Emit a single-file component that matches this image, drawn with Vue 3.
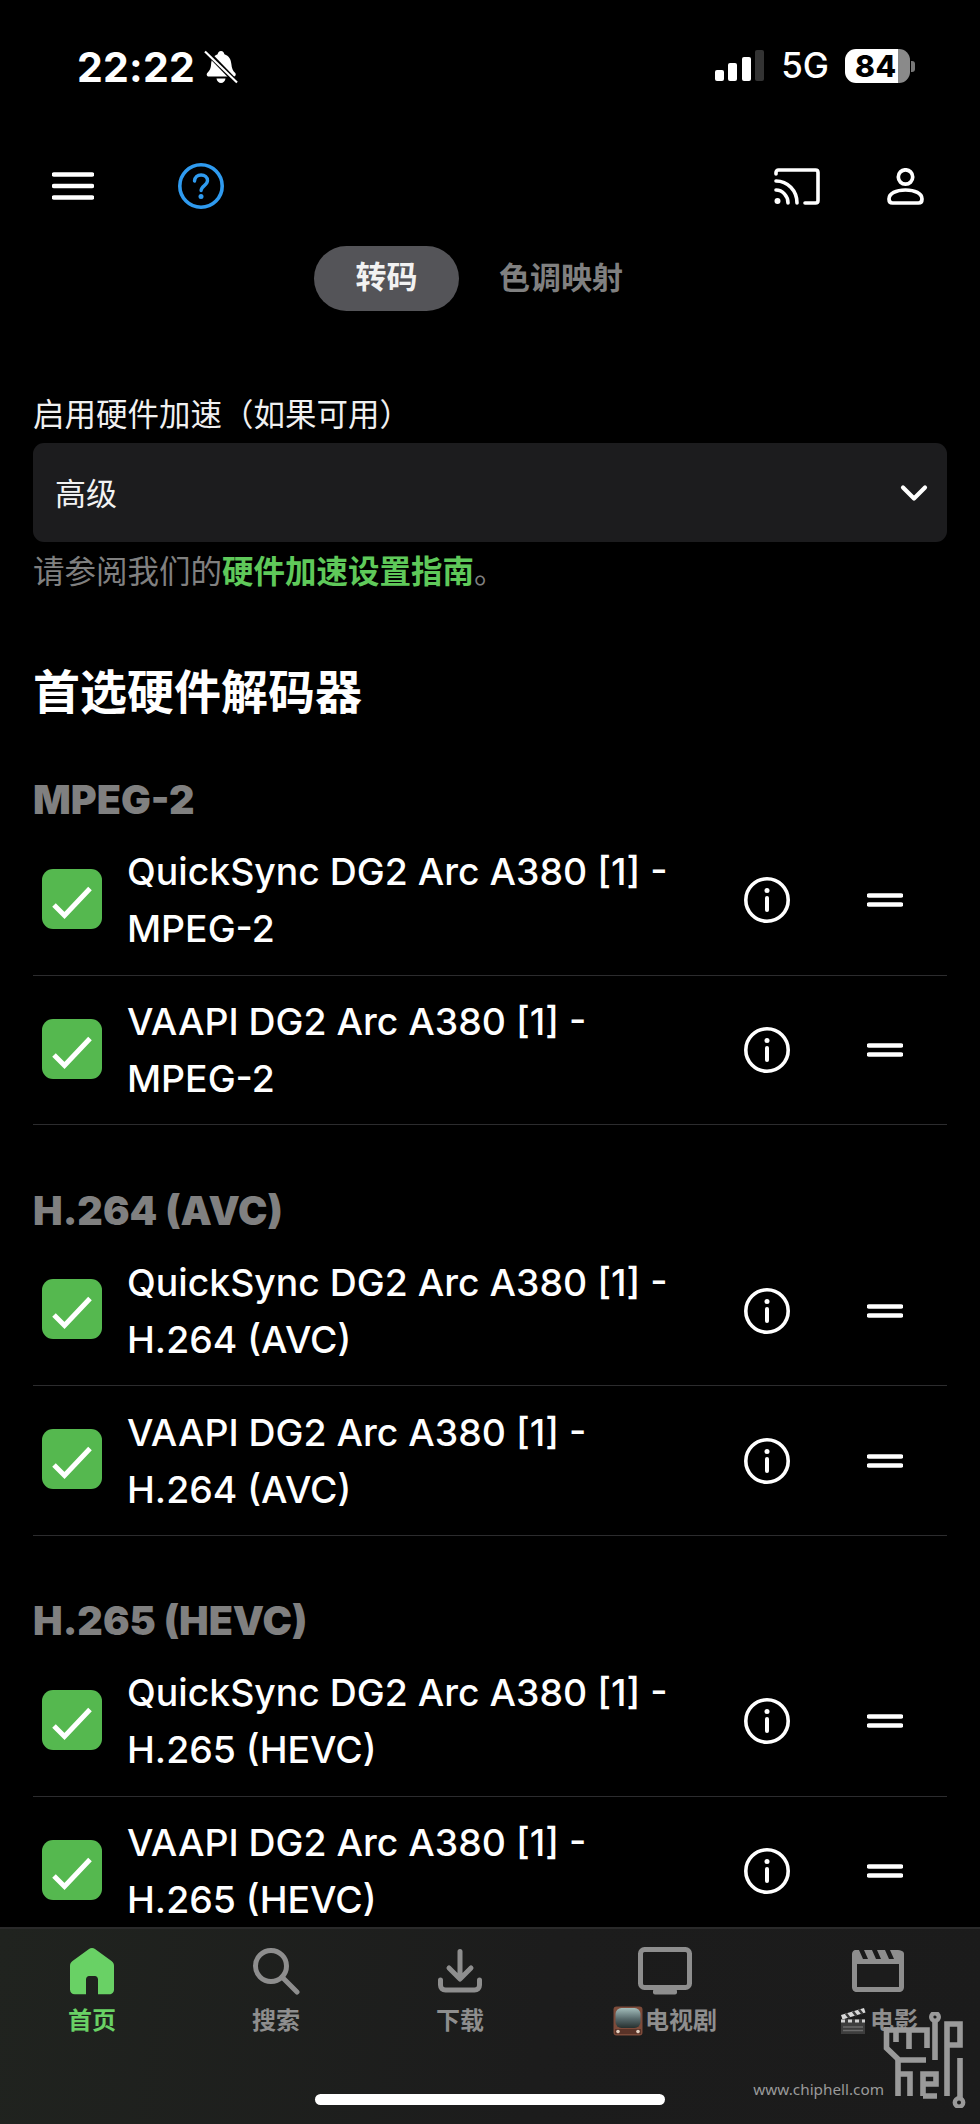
<template>
  <div class="screen">
    <header class="status-bar">
      <div class="status-left">
        <span class="clock">22:22</span>
        <svg class="bell" viewBox="0 0 34 34" width="34" height="34">
          <path d="M17 1c2 0 3 1.500 3.400 3.200 4.600 1.400 6.600 5 7 10 .3 4 1.500 6.500 3.600 8.500 1.500 1.600.6 3.800-1.500 3.800H5c-2.200 0-3-2.300-1.500-3.800 2.200-2.100 3.400-4.600 3.600-8.500.3-5 2.400-8.600 6.500-10C14 2.500 15 1 17 1z" fill="#fff" />
          <path d="M12.500 28.500h9c-.5 2.800-2.300 4.500-4.500 4.500s-4-1.700-4.500-4.500z" fill="#fff" />
          <path d="M2 1l31 32" stroke="#000" stroke-width="5" />
          <path d="M1 1.500l32 31" stroke="#fff" stroke-width="2.200" />
        </svg>
      </div>
      <div class="status-right">
        <div class="signal">
          <i class="bar b1"></i><i class="bar b2"></i><i class="bar b3"></i><i class="bar b4"></i>
        </div>
        <span class="net">5G</span>
        <div class="battery">
          <div class="battery-body"><span class="battery-num">84</span></div>
          <i class="battery-cap"></i>
        </div>
      </div>
    </header>

    <nav class="toolbar">
      <div class="toolbar-left">
        <svg class="ic-menu" viewBox="0 0 42 28" width="42" height="28">
          <path d="M2 2.500h38M2 14h38M2 25.500h38" stroke="#fff" stroke-width="4.400" stroke-linecap="round" />
        </svg>
        <svg class="ic-help" viewBox="0 0 46 46" width="46" height="46">
          <circle cx="23" cy="23" r="21.200" fill="none" stroke="#2f9bf0" stroke-width="3.600" />
          <path d="M16.500 18c.3-3.800 3-6 6.600-6 3.700 0 6.400 2.300 6.400 5.600 0 4.900-6.400 5-6.400 10" fill="none" stroke="#2f9bf0" stroke-width="3.400" stroke-linecap="round" />
          <circle cx="23" cy="33.500" r="2.500" fill="#2f9bf0" />
        </svg>
      </div>
      <div class="toolbar-right">
        <svg class="ic-cast" viewBox="0 0 46 37" width="46" height="37">
          <path d="M2 6V4.500C2 3 3 2 4.500 2h37C43 2 44 3 44 4.500v28c0 1.500-1 2.500-2.500 2.500H31" fill="none" stroke="#fff" stroke-width="3.600" stroke-linecap="round" />
          <path d="M2 13c11.500 0 21 9.500 21 22M2 22c6.500 0 12 6 12 13" fill="none" stroke="#fff" stroke-width="3.600" stroke-linecap="round" />
          <circle cx="3.500" cy="33" r="3" fill="#fff" />
        </svg>
        <svg class="ic-user" viewBox="0 0 37 37" width="37" height="37">
          <circle cx="18.500" cy="9" r="7.200" fill="none" stroke="#fff" stroke-width="3.700" />
          <path d="M18.500 22C9 22 2 25.500 2 31c0 2.500 1.300 4 3.500 4h26c2.200 0 3.500-1.500 3.500-4 0-5.500-7-9-16.500-9z" fill="none" stroke="#fff" stroke-width="3.700" />
        </svg>
      </div>
    </nav>

    <div class="tabs">
      <span class="tab active">转码</span>
      <span class="tab">色调映射</span>
    </div>

    <main class="content">
      <label class="field-label">启用硬件加速（如果可用）</label>
      <div class="select">
        <span>高级</span>
        <svg viewBox="0 0 28 18" width="28" height="18">
          <path d="M3 3.500l11 11 11-11" fill="none" stroke="#fff" stroke-width="4.200" stroke-linecap="round" stroke-linejoin="round" />
        </svg>
      </div>
      <p class="hint">请参阅我们的<b class="link">硬件加速设置指南</b>。</p>

      <h2 class="heading">首选硬件解码器</h2>

      <section v-for="group in groups" :key="group" class="codec">
        <h3 class="codec-title">{{ group }}</h3>
        <div v-for="api in apis" :key="api" class="row">
          <span class="check">
            <svg viewBox="0 0 60 60" width="60" height="60">
              <path d="M12 36l10.500 10.500L48 19.500" fill="none" stroke="#fff" stroke-width="5" />
            </svg>
          </span>
          <span class="row-text">{{ api }} DG2 Arc A380 [1] - {{ group }}</span>
          <svg class="ic-info" viewBox="0 0 46 46" width="46" height="46">
            <circle cx="23" cy="23" r="21.200" fill="none" stroke="#fff" stroke-width="3.600" />
            <circle cx="23" cy="13.500" r="2.500" fill="#fff" />
            <path d="M23 21v12" stroke="#fff" stroke-width="4" stroke-linecap="round" />
          </svg>
          <svg class="ic-drag" viewBox="0 0 36 14" width="36" height="14">
            <path d="M2 2.500h32M2 11.500h32" stroke="#fff" stroke-width="4.400" stroke-linecap="round" />
          </svg>
        </div>
      </section>
    </main>

    <footer class="tabbar">
      <div class="tab-item current">
        <svg viewBox="0 0 44 47" width="44" height="47">
          <path d="M19 1.500c1.800-1.300 4.200-1.300 6 0l16.500 12c1.500 1 2.500 2.800 2.500 4.700V42c0 2.800-2 4.800-4.800 4.800H28V32c0-2-1.500-3.500-3-3.500h-6c-1.500 0-3 1.500-3 3.500v14.800H4.800C2 46.800 0 44.800 0 42V18.200c0-1.900 1-3.700 2.500-4.700z" fill="#69d165" />
        </svg>
        <span>首页</span>
      </div>
      <div class="tab-item">
        <svg viewBox="0 0 48 48" width="48" height="48">
          <circle cx="19" cy="19" r="15.500" fill="none" stroke="#8e8e8e" stroke-width="5" />
          <path d="M30 30l15 15" stroke="#8e8e8e" stroke-width="5" stroke-linecap="round" />
        </svg>
        <span>搜索</span>
      </div>
      <div class="tab-item">
        <svg viewBox="0 0 44 44" width="44" height="44">
          <path d="M22 2.500v26M11 19l11 11 11-11" fill="none" stroke="#8e8e8e" stroke-width="5" stroke-linecap="round" stroke-linejoin="round" />
          <path d="M2.500 31v5c0 3 2 5 5 5h29c3 0 5-2 5-5v-5" fill="none" stroke="#8e8e8e" stroke-width="5" stroke-linecap="round" />
        </svg>
        <span>下载</span>
      </div>
      <div class="tab-item">
        <svg viewBox="0 0 54 48" width="54" height="48">
          <rect x="2.500" y="2.500" width="49" height="38" rx="4" fill="none" stroke="#8e8e8e" stroke-width="5" />
          <rect x="15" y="42" width="24" height="5.500" rx="2" fill="#8e8e8e" />
        </svg>
        <span class="with-emoji">
          <svg class="emoji" viewBox="0 0 30 30" width="30" height="30">
            <defs>
              <linearGradient id="tvScreen" x1="0.500" y1="0" x2="0.500" y2="1">
                <stop offset="0" stop-color="#a3bdbb" />
                <stop offset="0.55" stop-color="#56686a" />
                <stop offset="1" stop-color="#27302f" />
              </linearGradient>
            </defs>
            <rect x="0.500" y="0.500" width="29" height="29" rx="3" fill="#7d4b3a" />
            <rect x="2.500" y="2" width="25" height="20" rx="6" fill="url(#tvScreen)" />
            <rect x="2" y="23" width="26" height="5" fill="#5a3328" />
            <circle cx="5" cy="25.500" r="1.800" fill="#e3d0c0" />
            <circle cx="25" cy="25.500" r="1.800" fill="#e3d0c0" />
          </svg>电视剧
        </span>
      </div>
      <div class="tab-item">
        <svg viewBox="0 0 54 44" width="54" height="44">
          <path d="M1 5C1 3 2.500 1 4.500 1H8l4 9h5l-4-9h8l4 9h5l-4-9h8l4 9h5l-4-9h5.500C51.500 1 53 3 53 5v33c0 3-2 5-5 5H6c-3 0-5-2-5-5z" fill="#8e8e8e" />
          <rect x="6" y="15" width="42" height="23" fill="#1c1c1c" />
        </svg>
        <span class="with-emoji">
          <svg class="emoji" viewBox="0 0 30 30" width="30" height="30">
            <path d="M3 9l23-7 1.500 4.500-23 7z" fill="#d8d8d8" />
            <path d="M8 7.500l3.500 4.500M15 5.500l3.500 4.500M21 3.500l3.500 4.500" stroke="#3a3a3a" stroke-width="2.500" />
            <rect x="3" y="13" width="24" height="15" fill="#3d3d3d" />
            <path d="M3 15h24" stroke="#cfcfcf" stroke-width="3" stroke-dasharray="4 3" />
            <path d="M5 21h20M5 24.500h20" stroke="#6a6a6a" stroke-width="1.400" />
          </svg>电影
        </span>
      </div>
    </footer>

    <i class="home-indicator"></i>

    <div class="watermark">
      <span class="wm-url">www.chiphell.com</span>
      <svg class="wm-logo" viewBox="0 0 83 96" width="83" height="96">
        <g fill="none" stroke="#9a9a9a" stroke-width="5.600">
          <path d="M3.500 15V36L16 48H43" />
          <path d="M1 18H44V36M13 18V30M26 18V37" />
          <circle cx="52" cy="5" r="3.800" stroke-width="4.400" />
          <path d="M52 9V48" />
          <path d="M64 84V12H77V33H64" />
          <path d="M15 48V84M15 62H27V84" />
          <path d="M40 84H54M40 84V62H53V72H40" />
          <path d="M77 46V86" />
          <circle cx="76" cy="90.500" r="4.200" stroke-width="4.400" />
        </g>
      </svg>
    </div>
  </div>
</template>

<script setup>
const groups = ['MPEG-2', 'H.264 (AVC)', 'H.265 (HEVC)']
const apis = ['QuickSync', 'VAAPI']
</script>

<style>
html, body { margin: 0; background: #000; }
</style>

<style scoped>
.screen {
  position: relative;
  width: 980px;
  height: 2124px;
  overflow: hidden;
  display: flex;
  flex-direction: column;
  background: #000;
  color: #fff;
  font-family: Inter, "Noto Sans CJK SC", sans-serif;
}

.status-bar {
  flex: none;
  height: 134px;
  box-sizing: border-box;
  padding: 47px 65px 0 77px;
  display: flex;
  justify-content: space-between;
  align-items: flex-start;
}
.status-left { display: flex; align-items: center; gap: 9px; }
.clock { font-size: 41px; line-height: 40px; font-weight: 700; letter-spacing: 0.2px; }
.status-right { display: flex; align-items: flex-start; padding-top: 3px; }
.signal { display: flex; align-items: flex-end; gap: 4.500px; height: 31px; margin-right: 17px; }
.bar { display: block; width: 9px; background: #fff; border-radius: 2px; }
.b1 { height: 11px; }
.b2 { height: 18px; }
.b3 { height: 24px; }
.b4 { height: 31px; background: #333; }
.net { font-size: 35px; line-height: 31px; font-weight: 500; margin-right: 16px; }
.battery { display: flex; align-items: center; height: 34px; margin-top: -1px; }
.battery-body {
  width: 65px;
  height: 34px;
  box-sizing: border-box;
  border-radius: 11px;
  padding-left: 10px;
  background: linear-gradient(90deg, #fff 0 81%, #8a8a8a 81% 100%);
  color: #000;
}
.battery-num { display: block; font-size: 30px; line-height: 34px; font-weight: 800; letter-spacing: 0.500px; }
.battery-cap { display: block; width: 4px; height: 11px; margin-left: 1px; background: #777; border-radius: 0 3px 3px 0; }

.toolbar {
  flex: none;
  height: 104px;
  box-sizing: border-box;
  padding: 0 56px 0 52px;
  display: flex;
  justify-content: space-between;
  align-items: flex-start;
}
.toolbar-left { display: flex; align-items: center; gap: 84px; height: 104px; }
.toolbar-right { display: flex; align-items: center; gap: 67px; height: 104px; }

.tabs {
  flex: none;
  height: 65px;
  padding-left: 314px;
  display: flex;
  align-items: center;
  gap: 40px;
  margin-top: 8px;
}
.tab { font-size: 31px; line-height: 65px; margin-top: -3px; font-weight: 700; color: #808080; }
.tab.active {
  width: 145px;
  height: 65px;
  margin-top: 0;
  line-height: 62px;
  text-align: center;
  border-radius: 33px;
  background: #545458;
  color: #f2f2f2;
}

.content { flex: 1; min-height: 0; overflow: hidden; padding: 0 33px; }

.field-label { display: block; margin-top: 80px; font-size: 31.500px; line-height: 48px; color: #f0f0f0; }
.select {
  height: 99px;
  margin-top: 4px;
  box-sizing: border-box;
  padding: 0 19px 3px 22px;
  display: flex;
  align-items: center;
  justify-content: space-between;
  background: #1c1c1e;
  border-radius: 11px;
  font-size: 31px;
  color: #f2f2f2;
}
.select svg { margin-top: 3px; }
.hint { margin: 7px 0 0; font-size: 31.500px; line-height: 46px; color: #808080; }
.link { color: #5fc95a; font-weight: 700; }

.heading { margin: 62px 0 46px; font-size: 47px; line-height: 70px; font-weight: 700; }

.codec { height: 410.500px; box-sizing: border-box; }
.codec-title { margin: 0; height: 53px; font-size: 39.500px; line-height: 54px; font-weight: 900; color: #808080; }

.row {
  height: 149.700px;
  box-sizing: border-box;
  border-bottom: 1px solid #2c2c2e;
  display: flex;
  align-items: center;
  padding-left: 9px;
}
.check {
  flex: none;
  width: 60px;
  height: 60px;
  margin-top: -3px;
  border-radius: 11px;
  background: #55b84f;
}
.check svg { display: block; }
.row-text { flex: none; width: 560px; margin-left: 25px; font-size: 37.400px; line-height: 57px; font-weight: 500; }
.ic-info { flex: none; margin-left: 57px; }
.ic-drag { flex: none; margin-left: 77px; }

.tabbar {
  flex: none;
  height: 197px;
  box-sizing: border-box;
  border-top: 2px solid #2a2a2a;
  padding-top: 18px;
  display: grid;
  grid-template-columns: 184px 184px 184px 226px 200px;
  align-content: start;
  background: linear-gradient(100deg, #20231f 0%, #1c1c1c 55%, #1b1b1b 100%);
}
.tab-item {
  display: flex;
  flex-direction: column;
  align-items: center;
  height: 89px;
  font-size: 24px;
  font-weight: 700;
  color: #8e8e8e;
}
.tab-item > svg { flex: none; height: 48px; }
.tab-item > span { margin-top: auto; line-height: 30px; }
.tab-item.current { color: #69d165; }
.with-emoji { display: flex; align-items: center; gap: 2px; }
.emoji { flex: none; }

.home-indicator {
  position: absolute;
  left: 315px;
  top: 2094px;
  width: 350px;
  height: 11px;
  border-radius: 6px;
  background: #fff;
}

.watermark {
  position: absolute;
  right: 14px;
  top: 2012px;
  display: flex;
  align-items: flex-end;
  color: #9a9a9a;
}
.wm-url { font-family: "Noto Sans", sans-serif; font-size: 15.300px; line-height: 20px; margin: 0 -1px 9px 0; }
.wm-logo { display: block; }
</style>
